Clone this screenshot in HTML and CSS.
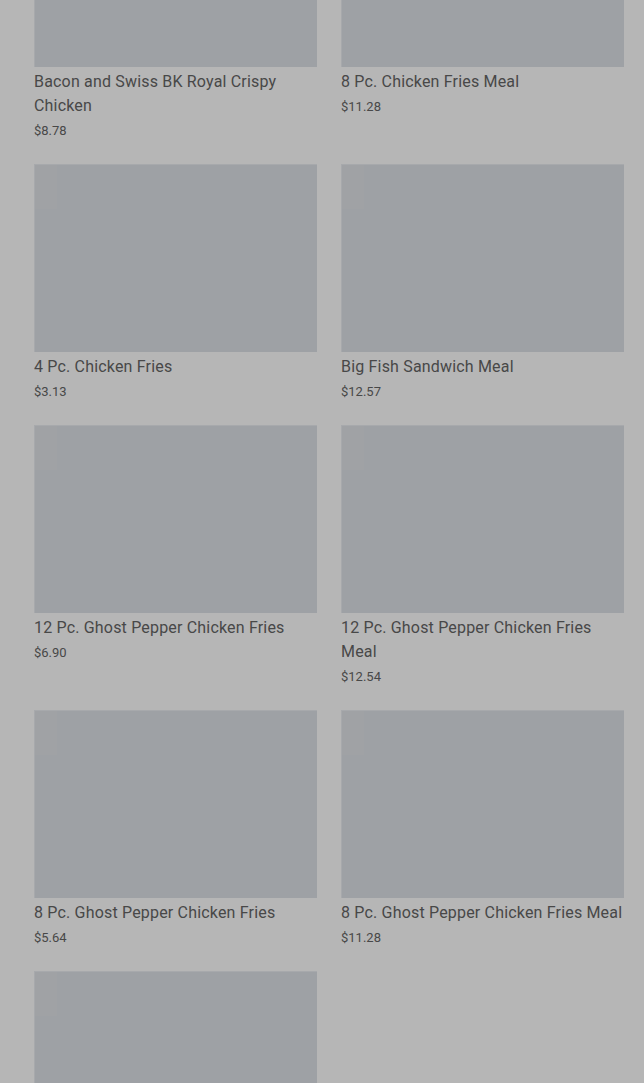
FILE: index.html
```html
<!DOCTYPE html>
<html lang="en">
<head>
<meta charset="utf-8">
<title>Menu</title>
<link rel="stylesheet" href="styles.css">
</head>
<body>
<main class="page">
  <div class="grid">
    <div class="card"><div class="thumb"><span class="ph"></span></div><div class="name">Bacon and Swiss BK Royal Crispy Chicken</div><div class="price">$8.78</div></div>
    <div class="card"><div class="thumb"><span class="ph"></span></div><div class="name">8 Pc. Chicken Fries Meal</div><div class="price">$11.28</div></div>
    <div class="card"><div class="thumb"><span class="ph"></span></div><div class="name">4 Pc. Chicken Fries</div><div class="price">$3.13</div></div>
    <div class="card"><div class="thumb"><span class="ph"></span></div><div class="name">Big Fish Sandwich Meal</div><div class="price">$12.57</div></div>
    <div class="card"><div class="thumb"><span class="ph"></span></div><div class="name">12 Pc. Ghost Pepper Chicken Fries</div><div class="price">$6.90</div></div>
    <div class="card"><div class="thumb"><span class="ph"></span></div><div class="name">12 Pc. Ghost Pepper Chicken Fries Meal</div><div class="price">$12.54</div></div>
    <div class="card"><div class="thumb"><span class="ph"></span></div><div class="name">8 Pc. Ghost Pepper Chicken Fries</div><div class="price">$5.64</div></div>
    <div class="card"><div class="thumb"><span class="ph"></span></div><div class="name">8 Pc. Ghost Pepper Chicken Fries Meal</div><div class="price">$11.28</div></div>
    <div class="card"><div class="thumb"><span class="ph"></span></div></div>
  </div>
</main>
</body>
</html>
```

FILE: styles.css
```css
html, body {
  margin: 0;
  padding: 0;
  background: #b6b6b6;
  overflow: hidden;
  height: 1083px;
}
.page {
  padding: 0 20px 0 34px;
  font-family: Roboto, "Liberation Sans", sans-serif;
  color: #484848;
}
.grid {
  margin-top: -121px;
  display: grid;
  grid-template-columns: 283px 283px;
  column-gap: 24px;
  row-gap: 20px;
  align-items: start;
}
.card {
  display: flex;
  flex-direction: column;
}
.thumb {
  height: 188px;
  background: #9ea1a5;
  box-shadow: inset 1px 1px 0 #a7a9ac;
  position: relative;
  margin-bottom: 3px;
}
.ph {
  position: absolute;
  left: 1px;
  top: 1px;
  width: 22px;
  height: 44px;
  background: #a0a2a5;
}
.name {
  font-size: 16px;
  line-height: 24px;
  font-weight: 400;
  letter-spacing: 0.18px;
}
.price {
  font-size: 13px;
  line-height: 26px;
}
```
